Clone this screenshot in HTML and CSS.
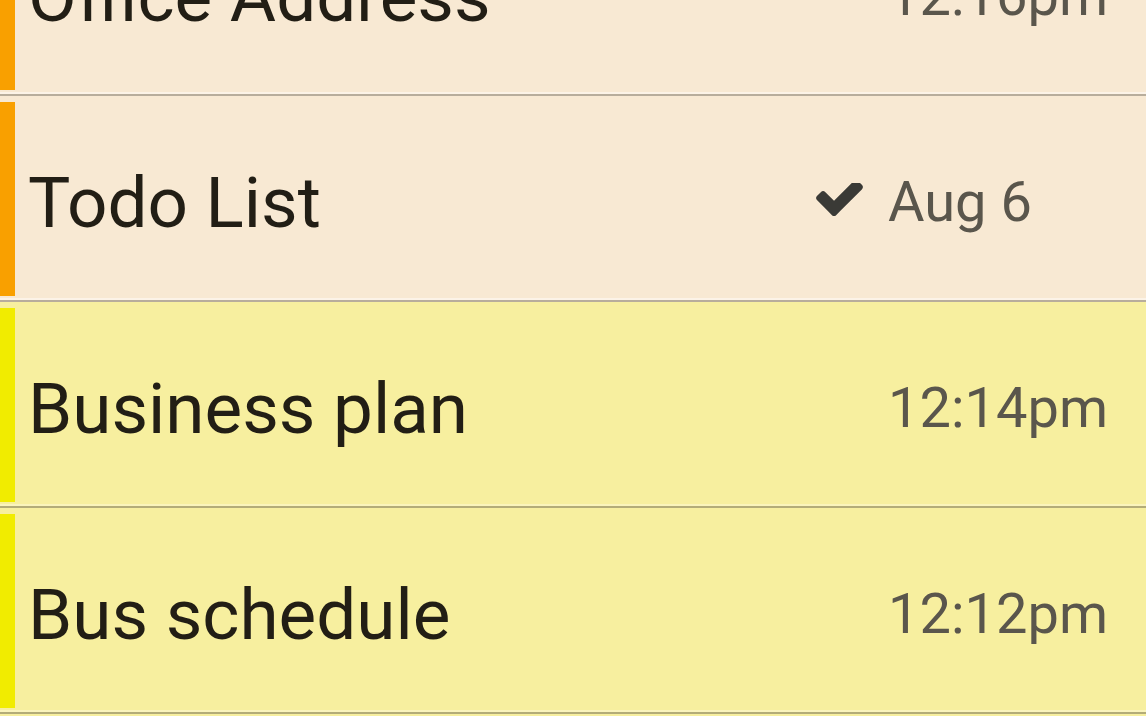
FILE: index.html
```html
<!DOCTYPE html>
<html lang="en">
<head>
<meta charset="utf-8">
<title>Notes</title>
<link rel="stylesheet" href="styles.css">
</head>
<body>
<ul class="notes">
  <li class="note note-orange">
    <span class="strip"></span>
    <span class="title">Office Address</span>
    <span class="meta">12:16pm</span>
  </li>
  <li class="note note-orange">
    <span class="strip"></span>
    <span class="title">Todo List</span>
    <svg class="check" viewBox="121 430 1550 1092" aria-hidden="true"><path d="M1671 566q0 40-28 68l-724 724-136 136q-28 28-68 28t-68-28l-136-136-362-362q-28-28-28-68t28-68l136-136q28-28 68-28t68 28l294 295 656-657q28-28 68-28t68 28l136 136q28 28 28 68z"/></svg>
    <span class="meta">Aug 6</span>
  </li>
  <li class="note note-yellow">
    <span class="strip"></span>
    <span class="title">Business plan</span>
    <span class="meta">12:14pm</span>
  </li>
  <li class="note note-yellow">
    <span class="strip"></span>
    <span class="title">Bus schedule</span>
    <span class="meta">12:12pm</span>
  </li>
</ul>
</body>
</html>
```
FILE: styles.css
```css
html, body {
  margin: 0;
  padding: 0;
  background: #f7ef9f;
  overflow: hidden;
}

.notes {
  list-style: none;
  margin: -110px 0 0 0;
  padding: 0;
  font-family: Roboto, "Liberation Sans", sans-serif;
}

.note {
  display: flex;
  align-items: center;
  height: 204px;
  border-bottom: 2px solid #b8ad9c;
  box-shadow: inset 0 -2px 0 #fcf3e7;
}

.note-orange {
  background: #f8e9d3;
}

.note-yellow {
  background: #f7ef9f;
  border-bottom-color: #b3ac78;
  box-shadow: inset 0 -2px 0 #faf4bb;
}

.strip {
  align-self: stretch;
  width: 15px;
  flex: none;
  margin: 6px 0 4px 0;
}

.note-orange .strip {
  background: #f9a000;
}

.note-yellow .strip {
  background: #f1ec00;
}

.title {
  flex: 1;
  margin-left: 13px;
  padding-top: 8px;
  font-size: 71px;
  color: #221e15;
  white-space: nowrap;
}

.check {
  width: 47px;
  height: 33px;
  margin-top: 2px;
  fill: #3a3a36;
  flex: none;
}

.meta {
  width: 218px;
  flex: none;
  margin-left: 25px;
  margin-right: 40px;
  padding-top: 8px;
  font-size: 56px;
  color: #5a564c;
  white-space: nowrap;
}
```
